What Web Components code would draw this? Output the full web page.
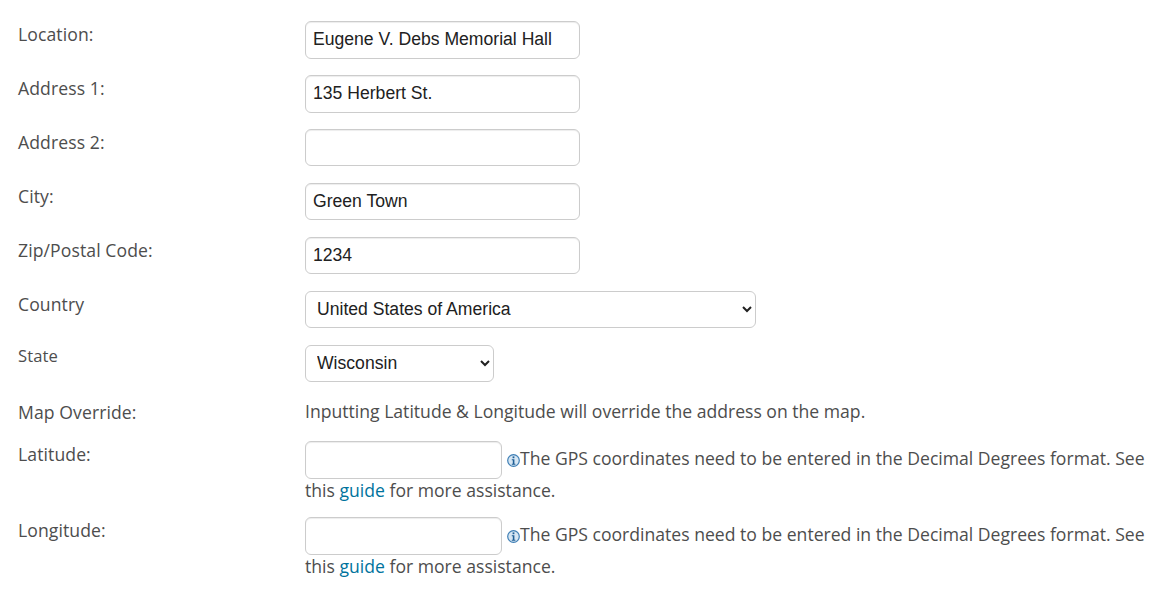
<!DOCTYPE html>
<html>
<head>
<meta charset="utf-8">
<title>Location</title>
<style>
  html, body { margin: 0; background: #fff; }
  body {
    font-family: "Open Sans", sans-serif;
    font-size: 17.6px;
    line-height: 26px;
    color: #4d4d4d;
    overflow: hidden;
  }
  main { display: block; padding: 21.45px 0 0 18px; }
</style>
</head>
<body>
<main>
  <form-row label="Location:"><text-field value="Eugene V. Debs Memorial Hall"></text-field></form-row>
  <form-row label="Address 1:"><text-field value="135 Herbert St."></text-field></form-row>
  <form-row label="Address 2:"><text-field></text-field></form-row>
  <form-row label="City:"><text-field value="Green Town"></text-field></form-row>
  <form-row label="Zip/Postal Code:"><text-field value="1234"></text-field></form-row>
  <form-row label="Country"><select-field value="United States of America" width="451"></select-field></form-row>
  <form-row label="State" small><select-field value="Wisconsin" width="189"></select-field></form-row>
  <form-row label="Map Override:" nudge>Inputting Latitude &amp; Longitude will override the address on the map.</form-row>
  <form-row label="Latitude:" tight><coord-field></coord-field></form-row>
  <form-row label="Longitude:" tight><coord-field></coord-field></form-row>
</main>

<script>
class FormRow extends HTMLElement {
  constructor() {
    super();
    this.attachShadow({ mode: 'open' });
  }

  connectedCallback() {
    let tight = this.hasAttribute('tight');
    let small = this.hasAttribute('small');
    let nudge = this.hasAttribute('nudge');
    this.shadowRoot.innerHTML = `
      <style>
        :host {
          display: grid;
          grid-template-columns: 287px 850px;
          margin-bottom: ${tight ? '11px' : '16.55px'};
        }
        label {
          font-size: ${small ? '16.6px' : '17.6px'};
          letter-spacing: .09px;
          line-height: 26px;
          margin-top: ${small ? '-2px' : nudge ? '1px' : '0'};
          margin-bottom: ${nudge ? '-1px' : '0'};
        }
      </style>
      <label>${this.getAttribute('label')}</label>
      <div><slot></slot></div>
    `;
  }
}

class TextField extends HTMLElement {
  constructor() {
    super();
    this.attachShadow({ mode: 'open' });
  }

  connectedCallback() {
    let value = this.getAttribute('value') || '';
    let width = this.getAttribute('width') || '275';
    let height = this.getAttribute('height') || '37.3';
    this.shadowRoot.innerHTML = `
      <style>
        :host { display: inline-block; vertical-align: top; }
        input {
          display: block;
          box-sizing: border-box;
          width: ${width}px;
          height: ${height}px;
          margin: 0;
          padding: 0 7px .6px;
          background: #fff;
          border: 1px solid #ccc;
          border-radius: 6px;
          box-shadow: inset 0 1px 1px rgba(0,0,0,.075);
          font: 17.6px "Liberation Sans", Arial, sans-serif;
          color: #212121;
          outline: none;
        }
      </style>
      <input type="text" value="${value}">
    `;
  }
}

class SelectField extends HTMLElement {
  constructor() {
    super();
    this.attachShadow({ mode: 'open' });
  }

  connectedCallback() {
    let value = this.getAttribute('value');
    let width = this.getAttribute('width');
    this.shadowRoot.innerHTML = `
      <style>
        :host { display: block; }
        select {
          display: block;
          box-sizing: border-box;
          width: ${width}px;
          height: 37.3px;
          margin: 0;
          padding: 0 7px 0;
          background: #fff;
          border: 1px solid #ccc;
          border-radius: 6px;
          font: 17.6px "Liberation Sans", Arial, sans-serif;
          color: #212121;
          outline: none;
        }
      </style>
      <select><option>${value}</option></select>
    `;
  }
}

class CoordField extends HTMLElement {
  constructor() {
    super();
    this.attachShadow({ mode: 'open' });
  }

  connectedCallback() {
    this.shadowRoot.innerHTML = `
      <style>
        :host { display: block; line-height: 32px; padding-top: 1px; }
        text-field { margin: -1px 5px -7px 0; }
        svg { vertical-align: -2px; }
        a { color: #00739d; text-decoration: none; }
      </style>
      <text-field width="197" height="38"></text-field><svg width="13" height="13" viewBox="0 0 13 13">
        <circle cx="6.5" cy="6.5" r="5.8" fill="#d6e6f3" stroke="#3f7fb5" stroke-width="1.2"/>
        <rect x="5.6" y="2.4" width="1.8" height="1.8" fill="#1f5f96"/>
        <path d="M4.8 5.3h2.6v4.4h1v1H4.8v-1h1V6.3h-1z" fill="#1f5f96"/>
      </svg>The GPS coordinates need to be entered in the Decimal Degrees format. See this <a href="#">guide</a> for more assistance.
    `;
  }
}

customElements.define('form-row', FormRow);
customElements.define('text-field', TextField);
customElements.define('select-field', SelectField);
customElements.define('coord-field', CoordField);
</script>
</body>
</html>
